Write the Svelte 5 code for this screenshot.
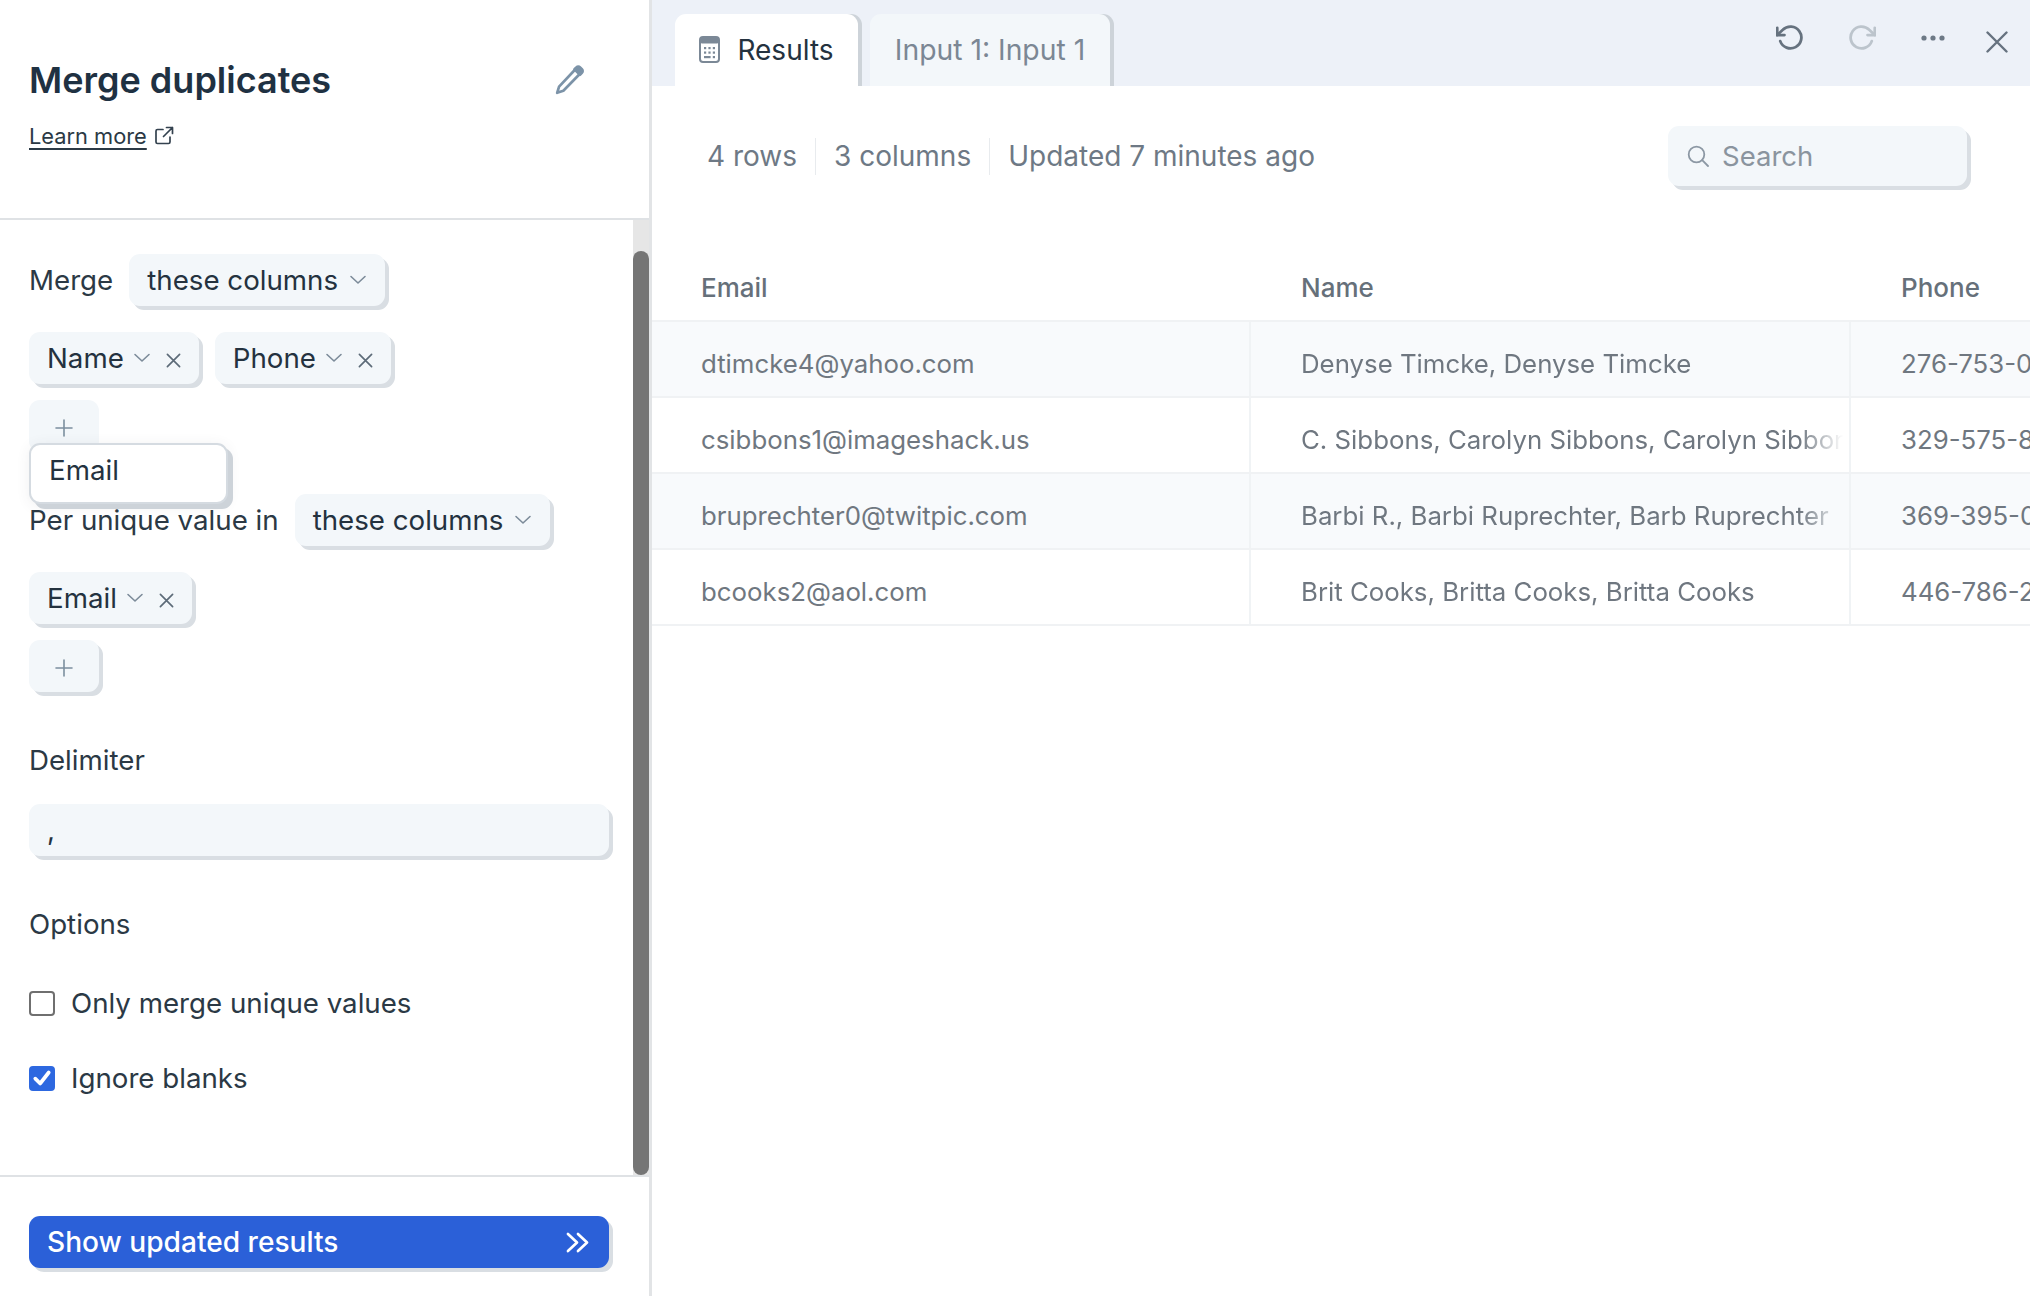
<script>
  const rows = [
    { email: 'dtimcke4@yahoo.com', name: 'Denyse Timcke, Denyse Timcke', phone: '276-753-0142' },
    { email: 'csibbons1@imageshack.us', name: 'C. Sibbons, Carolyn Sibbons, Carolyn Sibbons', phone: '329-575-8120' },
    { email: 'bruprechter0@twitpic.com', name: 'Barbi R., Barbi Ruprechter, Barb Ruprechter', phone: '369-395-0071' },
    { email: 'bcooks2@aol.com', name: 'Brit Cooks, Britta Cooks, Britta Cooks', phone: '446-786-2215' }
  ];
</script>

{#snippet chevron()}
  <svg class="chev" viewBox="0 0 18 18" fill="none" stroke="currentColor" stroke-width="1.6" stroke-linecap="round" stroke-linejoin="round"><path d="M2 5.5 9 12l7-6.5"/></svg>
{/snippet}

{#snippet cross()}
  <svg class="cross" viewBox="0 0 16 16" fill="none" stroke="currentColor" stroke-width="1.8" stroke-linecap="round"><path d="M1.500 1.500 14.500 14.500M14.500 1.500 1.500 14.500"/></svg>
{/snippet}

{#snippet plus()}
  <svg class="plus" viewBox="0 0 18 18" fill="none" stroke="currentColor" stroke-width="1.6" stroke-linecap="round"><path d="M9 1v16M1 9h16"/></svg>
{/snippet}

<div class="page">
  <aside class="panel">
    <header class="head">
      <div class="title-row">
        <h1>Merge duplicates</h1>
        <svg class="pencil" viewBox="0 0 28 28" fill="none" stroke="#7c93a8" stroke-width="2.5" stroke-linejoin="round">
          <path d="M19.500 3.500 3.800 20.200 2 26l5.800-2L24 7.500z"/>
          <path d="M20 2.200a2.400 2.400 0 0 1 3.400 0l1.700 1.700a2.400 2.400 0 0 1 0 3.400l-1.800 1.800-5.100-5.100z" fill="#7c93a8"/>
        </svg>
      </div>
      <div class="learn">
        <span class="learn-link">Learn more</span>
        <svg class="ext" viewBox="0 0 20 20" fill="none" stroke="#34424f" stroke-width="1.700" stroke-linecap="round" stroke-linejoin="round">
          <path d="M9 3.500H3.500a1.500 1.500 0 0 0-1.500 1.500v11a1.500 1.500 0 0 0 1.500 1.500h11a1.500 1.500 0 0 0 1.500-1.500v-5"/>
          <path d="M12.500 1.500h6v6M18.500 1.500 9.500 10.500"/>
        </svg>
      </div>
    </header>

    <div class="scroller">
      <div class="form">
        <div class="line">
          <span class="label">Merge</span>
          <div class="pill">these columns {@render chevron()}</div>
        </div>
        <div class="tags tags-first">
          <div class="pill tag"><span>Name</span>{@render chevron()}{@render cross()}</div>
          <div class="pill tag"><span>Phone</span>{@render chevron()}{@render cross()}</div>
        </div>
        <div class="add-wrap">
          <div class="pill add add-flat">{@render plus()}</div>
          <div class="popup">Email</div>
        </div>

        <div class="line line-per">
          <span class="label">Per unique value in</span>
          <div class="pill">these columns {@render chevron()}</div>
        </div>
        <div class="tags tags-email">
          <div class="pill tag"><span>Email</span>{@render chevron()}{@render cross()}</div>
        </div>
        <div class="add-wrap">
          <div class="pill add">{@render plus()}</div>
        </div>

        <div class="label block delim">Delimiter</div>
        <div class="input">,</div>

        <div class="label block options">Options</div>
        <label class="check check-one"><span class="box"></span>Only merge unique values</label>
        <label class="check check-two">
          <span class="box on">
            <svg viewBox="0 0 18 18" fill="none" stroke="#fff" stroke-width="3" stroke-linecap="round" stroke-linejoin="round"><path d="M3.500 9.500 7.500 13.500 14.500 4.500"/></svg>
          </span>
          Ignore blanks
        </label>
      </div>
      <div class="track"><div class="thumb"></div></div>
    </div>

    <footer class="foot">
      <div class="run">
        <span>Show updated results</span>
        <svg viewBox="0 0 26 22" fill="none" stroke="#fff" stroke-width="2.800" stroke-linecap="round" stroke-linejoin="round"><path d="M3 2l9.500 9L3 20M13.500 2l9.500 9-9.500 9"/></svg>
      </div>
    </footer>
  </aside>

  <main class="results">
    <div class="tabbar">
      <div class="tab active">
        <svg class="calc" viewBox="0 0 21 27" fill="none">
          <rect x="1" y="1" width="19" height="25" rx="3" stroke="#7b8896" stroke-width="2"/>
          <rect x="1" y="1" width="19" height="6.500" rx="2" fill="#7b8896"/>
          <g fill="#7b8896">
            <rect x="5" y="11" width="2.200" height="2.200"/><rect x="9.400" y="11" width="2.200" height="2.200"/><rect x="13.800" y="11" width="2.200" height="2.200"/>
            <rect x="5" y="15.500" width="2.200" height="2.200"/><rect x="9.400" y="15.500" width="2.200" height="2.200"/><rect x="13.800" y="15.500" width="2.200" height="2.200"/>
            <rect x="5" y="20" width="6.600" height="2.200"/><rect x="13.800" y="20" width="2.200" height="2.200"/>
          </g>
        </svg>
        Results
      </div>
      <div class="tab">Input 1: Input 1</div>
      <div class="actions">
        <svg class="act undo" viewBox="0 0 24 24" fill="none" stroke="#66727f" stroke-width="2.300" stroke-linecap="round" stroke-linejoin="round"><path d="M1 4v6h6"/><path d="M3.510 15a9 9 0 1 0 2.130-9.360L1 10"/></svg>
        <svg class="act redo" viewBox="0 0 24 24" fill="none" stroke="#bcc4cc" stroke-width="2.300" stroke-linecap="round" stroke-linejoin="round"><path d="M23 4v6h-6"/><path d="M20.490 15a9 9 0 1 1-2.120-9.360L23 10"/></svg>
        <svg class="act dots" viewBox="0 0 24 6" fill="#6d7986"><circle cx="3" cy="3" r="2.600"/><circle cx="12" cy="3" r="2.600"/><circle cx="21" cy="3" r="2.600"/></svg>
        <svg class="act close" viewBox="0 0 22 22" fill="none" stroke="#66727f" stroke-width="2.400" stroke-linecap="round"><path d="M1.500 1.500l19 19M20.500 1.500l-19 19"/></svg>
      </div>
    </div>

    <div class="meta">
      <span class="stat">4 rows</span>
      <span class="stat">3 columns</span>
      <span class="stat">Updated 7 minutes ago</span>
      <div class="search">
        <svg viewBox="0 0 22 22" fill="none" stroke="#8c98a4" stroke-width="1.800" stroke-linecap="round"><circle cx="9.500" cy="9.500" r="7.800"/><path d="M15.200 15.200 21 21"/></svg>
        <span>Search</span>
      </div>
    </div>

    <div class="table">
      <div class="thead">
        <div class="th">Email</div>
        <div class="th">Name</div>
        <div class="th">Phone</div>
      </div>
      {#each rows as row, i}
        <div class="tr" class:zebra={i % 2 === 0}>
          <div class="td">{row.email}</div>
          <div class="td"><span class="fade">{row.name}</span></div>
          <div class="td">{row.phone}</div>
        </div>
      {/each}
    </div>
  </main>
</div>

<style>
  :global(body) {
    margin: 0;
    background: #fff;
  }

  .page {
    display: flex;
    width: 2030px;
    height: 1296px;
    overflow: hidden;
    font-family: Inter, "Liberation Sans", sans-serif;
    font-size: 27.7px;
    color: #24323f;
  }

  .panel {
    width: 649px;
    flex-shrink: 0;
    display: flex;
    flex-direction: column;
    border-right: 3px solid #e2e4e6;
  }

  .head {
    height: 220px;
    flex-shrink: 0;
    box-sizing: border-box;
    padding: 57px 0 0 29px;
    border-bottom: 2px solid #dfe2e5;
  }

  .title-row {
    display: flex;
    align-items: center;
    justify-content: space-between;
    padding-right: 64px;
    height: 46px;
  }

  h1 {
    margin: 0;
    font-size: 36px;
    font-weight: 600;
    color: #1f3142;
  }

  .pencil {
    width: 30px;
    height: 30px;
  }

  .learn {
    display: flex;
    align-items: center;
    gap: 7px;
    margin-top: 20px;
    font-size: 21.8px;
    color: #2b3945;
  }

  .learn-link {
    text-decoration: underline;
    text-underline-offset: 4px;
  }

  .ext {
    width: 20px;
    height: 20px;
  }

  .scroller {
    flex: 1;
    min-height: 0;
    display: flex;
  }

  .form {
    flex: 1;
    min-width: 0;
    padding: 34px 24px 0 29px;
  }

  .track {
    width: 16px;
    flex-shrink: 0;
    background: #e6e6e6;
    padding-top: 31px;
    display: flex;
    box-sizing: border-box;
  }

  .thumb {
    flex: 1;
    background: #757575;
    border-radius: 8px;
  }

  .line {
    display: flex;
    align-items: center;
    gap: 16px;
  }

  .line .chev {
    margin-left: 11px;
  }

  .line-per {
    margin-top: 42px;
    position: relative;
  }

  .label {
    color: #2b3945;
  }

  .block {
    line-height: 32px;
  }

  .pill {
    display: flex;
    align-items: center;
    height: 52px;
    box-sizing: border-box;
    padding: 0 18px;
    background: #f3f7fa;
    border-radius: 11px;
    box-shadow: 4px 4px 0 #d9dee3;
    color: #24323f;
    width: fit-content;
    white-space: nowrap;
  }

  .chev {
    width: 18px;
    height: 18px;
    color: #7c8b99;
    margin-left: 9px;
  }

  .cross {
    width: 15px;
    height: 15px;
    color: #5d6b78;
    margin: 4px 0 0 15px;
  }

  .plus {
    width: 18px;
    height: 18px;
    color: #7c8f9f;
    margin-top: 3px;
  }

  .tags {
    display: flex;
    gap: 16px;
  }

  .tags-first {
    margin-top: 26px;
  }

  .tags-email {
    margin-top: 26px;
  }

  .add-wrap {
    position: relative;
    margin-top: 16px;
    height: 52px;
  }

  .add {
    width: 70px;
    padding: 0;
    justify-content: center;
  }

  .add-flat {
    box-shadow: none;
  }

  .popup {
    position: absolute;
    left: 0;
    top: 43px;
    width: 199px;
    height: 61px;
    box-sizing: border-box;
    padding: 0 0 7px 18px;
    display: flex;
    align-items: center;
    background: #fff;
    border: 2px solid #d5dbe1;
    border-radius: 11px;
    box-shadow: 5px 5px 0 #cdd3d9, 0 2px 14px rgba(60, 70, 80, 0.08);
    z-index: 2;
  }

  .delim {
    margin-top: 52px;
  }

  .input {
    margin-top: 28px;
    height: 52px;
    box-sizing: border-box;
    padding: 0 18px;
    line-height: 52px;
    width: 580px;
    background: #f3f7fa;
    border-radius: 11px;
    box-shadow: 4px 4px 0 #d9dee3;
  }

  .options {
    margin-top: 52px;
  }

  .check {
    display: flex;
    align-items: center;
    gap: 16px;
    height: 32px;
    color: #2b3945;
  }

  .check-one {
    margin-top: 47px;
  }

  .check-two {
    margin-top: 43px;
  }

  .box {
    width: 26px;
    height: 25px;
    box-sizing: border-box;
    border: 2px solid #6f6f6f;
    border-radius: 4px;
    background: #fff;
    display: flex;
    align-items: center;
    justify-content: center;
  }

  .box.on {
    background: #2d68e0;
    border-color: #2d68e0;
  }

  .box svg {
    width: 22px;
    height: 22px;
  }

  .foot {
    height: 121px;
    flex-shrink: 0;
    box-sizing: border-box;
    border-top: 2px solid #dfe2e5;
    padding: 39px 0 0 29px;
  }

  .run {
    width: 580px;
    height: 52px;
    box-sizing: border-box;
    padding: 0 19px 0 18px;
    display: flex;
    align-items: center;
    justify-content: space-between;
    background: #2b60d8;
    color: #fff;
    border-radius: 11px;
    box-shadow: 4px 4px 0 #d9dee3;
    font-size: 28.1px;
    font-weight: 500;
  }

  .run svg {
    width: 25px;
    height: 21px;
  }

  .results {
    flex: 1;
    min-width: 0;
    overflow: hidden;
  }

  .tabbar {
    height: 86px;
    background: #edf1f8;
    display: flex;
    align-items: flex-end;
    padding-left: 23px;
    position: relative;
  }

  .tab {
    height: 72px;
    box-sizing: border-box;
    display: flex;
    align-items: center;
    justify-content: center;
    gap: 17px;
    padding-bottom: 1px;
    width: 240px;
    margin-left: 12px;
    background: #f3f7fa;
    border-radius: 11px 11px 0 0;
    box-shadow: 4px 0 0 #cdd3d9;
    color: #7b8794;
    font-size: 28.3px;
  }

  .tab.active {
    width: 183px;
    margin-left: 0;
    background: #fff;
    color: #24323f;
    font-size: 28px;
  }

  .calc {
    width: 21px;
    height: 27px;
  }

  .actions {
    position: absolute;
    inset: 0;
    pointer-events: none;
  }

  .act {
    position: absolute;
  }

  .undo {
    left: 1124px;
    top: 23px;
    width: 29px;
    height: 29px;
  }

  .redo {
    left: 1195px;
    top: 23px;
    width: 29px;
    height: 29px;
  }

  .dots {
    left: 1269px;
    top: 35px;
    width: 24px;
    height: 6px;
  }

  .close {
    left: 1334px;
    top: 31px;
    width: 22px;
    height: 22px;
  }

  .meta {
    height: 140px;
    box-sizing: border-box;
    padding-left: 55px;
    display: flex;
    align-items: center;
    color: #6e7985;
    font-size: 28px;
  }

  .stat {
    line-height: 37px;
    padding-right: 18px;
    margin-right: 18px;
    border-right: 1px solid #e8ebee;
  }

  .stat:nth-child(3) {
    border-right: none;
  }

  .search {
    margin-left: auto;
    margin-right: 63px;
    width: 299px;
    height: 60px;
    box-sizing: border-box;
    padding-left: 19px;
    display: flex;
    align-items: center;
    gap: 13px;
    background: #f3f7fa;
    border-radius: 11px;
    box-shadow: 4px 4px 0 #d9dee3;
    color: #8a949e;
    font-size: 27.5px;
  }

  .search svg {
    width: 22px;
    height: 22px;
  }

  .table {
    padding-top: 14px;
    font-size: 25.8px;
  }

  .thead,
  .tr {
    display: grid;
    grid-template-columns: 599px 600px 1fr;
  }

  .thead {
    height: 82px;
    box-sizing: border-box;
    align-items: center;
    border-bottom: 2px solid #f0f2f4;
    color: #66707a;
    font-size: 26px;
    font-weight: 500;
    padding-top: 14px;
  }

  .th,
  .td {
    padding-left: 49px;
    white-space: nowrap;
    overflow: hidden;
  }

  .th:nth-child(n + 2),
  .td:nth-child(n + 2) {
    padding-left: 50px;
  }

  .tr {
    height: 76px;
    box-sizing: border-box;
    border-bottom: 2px solid #f0f2f4;
    color: #6f7780;
  }

  .tr.zebra {
    background: #f8fafc;
  }

  .td {
    padding-top: 5px;
    line-height: 74px;
    border-right: 2px solid #f0f3f5;
    box-sizing: border-box;
    display: block;
  }

  .td:last-child {
    border-right: none;
  }

  .fade {
    display: block;
    -webkit-mask-image: linear-gradient(to right, #000 calc(100% - 50px), transparent calc(100% - 6px));
    mask-image: linear-gradient(to right, #000 calc(100% - 50px), transparent calc(100% - 6px));
    overflow: hidden;
  }
</style>
